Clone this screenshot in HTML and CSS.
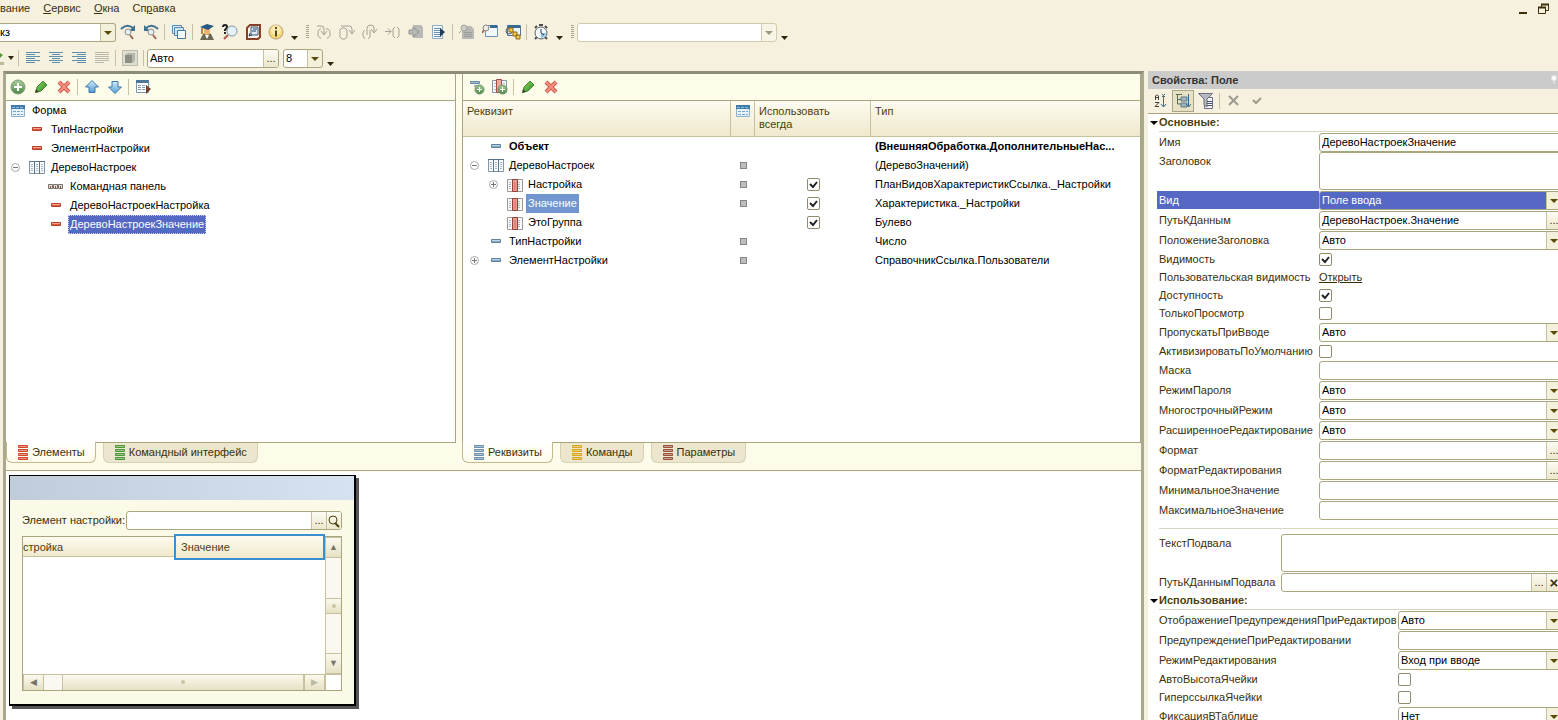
FILE: index.html
```
<!DOCTYPE html>
<html lang="ru">

<head>
    <meta charset="utf-8">
    <title>Конфигуратор</title>
    <link rel="stylesheet" href="styles.css">
</head>

<body>
    <svg class="sprite">
        <defs>
            <linearGradient id="blue" x1="0" y1="0" x2="0" y2="1">
                <stop offset="0" stop-color="#d4ecfb" />
                <stop offset="1" stop-color="#4f9bd6" />
            </linearGradient>
            <linearGradient id="green" x1="0" y1="0" x2="0" y2="1">
                <stop offset="0" stop-color="#a9cf9a" />
                <stop offset="1" stop-color="#4b8746" />
            </linearGradient>
            <linearGradient id="leaf" x1="0" y1="0" x2="1" y2="1">
                <stop offset="0" stop-color="#8fd46c" />
                <stop offset="1" stop-color="#2f8a1d" />
            </linearGradient>
        </defs>
        <symbol id="find-next" viewBox="0 0 16 16">
            <path d="M1 5Q7-1 13 4" fill="none" stroke="#3f7090" stroke-width="2" />
            <path d="M15 1v6H9z" fill="#3f7090" />
            <circle cx="8" cy="8" r="3" fill="#e5eef2" stroke="#8d8d8d" />
            <path d="M10 11l3 4" stroke="#a5675a" stroke-width="2" />
        </symbol>
        <symbol id="find-prev" viewBox="0 0 16 16">
            <path d="M15 5Q9-1 3 4" fill="none" stroke="#3f7090" stroke-width="2" />
            <path d="M1 1v6h6z" fill="#3f7090" />
            <circle cx="8" cy="8" r="3" fill="#e5eef2" stroke="#8d8d8d" />
            <path d="M10 11l3 4" stroke="#a5675a" stroke-width="2" />
        </symbol>
        <symbol id="windows" viewBox="0 0 16 16">
            <path d="M1.500 1.500h9v8h-9z" fill="#e4f1fa" stroke="#5b87a8" />
            <path d="M3.500 3.500h9v8h-9z" fill="#cfe4f3" stroke="#5b87a8" />
            <path d="M6.500 6.500h8v8h-8z" fill="#f3fafe" stroke="#44779c" />
        </symbol>
        <symbol id="student" viewBox="0 0 16 16">
            <path d="M4 10q4-2 8 0l3 6H1z" fill="#6b6753" />
            <ellipse cx="8" cy="7" rx="3" ry="4" fill="#edb36c" />
            <path d="M6 11l2 4 2-4z" fill="#fff" />
            <path d="M1 3l7-3 7 2-6 4z" fill="#285b83" />
            <path d="M3 4v6" stroke="#c08a2c" stroke-width="2" />
        </symbol>
        <symbol id="help-find" viewBox="0 0 16 16">
            <path d="M1 3q0-2 2-2t2 2q0 1-2 3v1M3 8v2" fill="none" stroke="#222" stroke-width="2" />
            <circle cx="10" cy="7" r="5" fill="#e6f2f8" stroke="#8297a2" />
            <path d="M6 11l-4 4" stroke="#ad5949" stroke-width="2" />
        </symbol>
        <symbol id="book" viewBox="0 0 16 16">
            <path d="M2 4l3-3h10v12l-2 2H2z" fill="#fffaf0" stroke="#8a3f28" stroke-width="2" />
            <path d="M6 3h7v8H6z" fill="#dcebf6" stroke="#3a5575" />
            <path d="M8 5h4M7 7h4M5 9l-1 3 3-1" fill="none" stroke="#263f66" />
        </symbol>
        <symbol id="info" viewBox="0 0 16 16">
            <circle cx="8" cy="8" r="7" fill="#f7d878" stroke="#b99a72" />
            <circle cx="8" cy="6" r="5" fill="#fff5cf" opacity=".6" />
            <path d="M8 3v2M8 6.500v6" stroke="#4b4a1e" stroke-width="2" />
        </symbol>
        <symbol id="step-in" viewBox="0 0 16 16">
            <path d="M5 5H4L2 7v5l2 2h1M10 5h2l2 2v5l-2 2h-1M1 2h4q3 0 3 3v5M5 7l3 4 3-4" fill="none" stroke="#a3a195" />
        </symbol>
        <symbol id="step-over" viewBox="0 0 16 16">
            <path d="M1 6l2-2h3l2 2v7l-2 2H3l-2-2zM2 2h8q3 0 3 3v4M10 6l3 4 3-4" fill="none" stroke="#a3a195" />
        </symbol>
        <symbol id="step-out" viewBox="0 0 16 16">
            <path d="M3 15l-2-3V8l2-2M8 6v7l-2 2M5 11V4q0-3 4-3 3 0 3 3v4M9 5l3 4 3-4" fill="none" stroke="#a3a195" />
        </symbol>
        <symbol id="run-to" viewBox="0 0 16 16">
            <path d="M0 7.500h6M3 4.500l3 3-3 3M10 3L8 5v7l2 2M12 3l2 2v7l-2 2" fill="none" stroke="#a3a195" />
        </symbol>
        <symbol id="stop-module" viewBox="0 0 16 16">
            <path d="M5 1h8l2 2v11H5z" fill="#b9bab5" />
            <path d="M1 6h4V3l6 5-6 5v-3H1z" fill="#b9bab5" stroke="#92938e" />
        </symbol>
        <symbol id="module-run" viewBox="0 0 16 16">
            <path d="M1.500 1.500h10v13h-10z" fill="#f8fbfd" stroke="#8facc3" />
            <path d="M3 4.500h7M3 6.500h7M3 8.500h7M3 10.500h7M3 12.500h7" stroke="#6c91b0" />
            <path d="M9 4l5 4-5 5z" fill="#203f59" />
        </symbol>
        <symbol id="module-gray" viewBox="0 0 16 16">
            <path d="M3 2h9l3 3v10H3z" fill="#b8b9b4" />
            <circle cx="5" cy="4" r="3" fill="#cfcfca" stroke="#a0a19c" />
            <path d="M2 7L0 9M5 8.500h8M5 10.500h8M5 12.500h8" stroke="#9a9b96" />
        </symbol>
        <symbol id="window-find" viewBox="0 0 16 16">
            <path d="M3.500 1.500h12v11h-12z" fill="#f2f8fc" stroke="#6c93b0" />
            <path d="M8 1h7v3H8z" fill="#356c96" />
            <circle cx="4" cy="4" r="3" fill="#e9e8e2" stroke="#91897f" />
            <path d="M2 6L0 9" stroke="#9a6d62" stroke-width="2" />
        </symbol>
        <symbol id="links" viewBox="0 0 16 16">
            <path d="M2.500 1.500h13v10h-13z" fill="#edf6fb" stroke="#557995" />
            <path d="M3 1h12v3H3z" fill="#356c96" />
            <circle cx="4" cy="7" r="3" fill="none" stroke="#556" />
            <path d="M4 4h4v4H4zM8 8h4v4H8zM11 11h4v4h-4z" fill="#f7c746" stroke="#8d6a14" />
        </symbol>
        <symbol id="timer" viewBox="0 0 16 16">
            <path d="M2 4l2-2M14 4l-2-2M6 1h4M4 13l-2 2M12 13l2 2" stroke="#4c4c48" stroke-width="2" />
            <circle cx="8" cy="9" r="6" fill="#f3f9fc" stroke="#5c6468" />
            <path d="M8 9h5a5 5 0 0 1-5 5z" fill="#8ec6e6" />
            <path d="M8 5v4l3 2" fill="none" stroke="#335" />
        </symbol>
        <symbol id="align-left" viewBox="0 0 16 16">
            <path d="M1 2.500h14M1 4.500h9M1 6.500h14M1 8.500h9M1 10.500h14M1 12.500h9" stroke="#5e8fae" />
        </symbol>
        <symbol id="align-center" viewBox="0 0 16 16">
            <path d="M1 2.500h14M4 4.500h8M1 6.500h14M4 8.500h8M1 10.500h14M4 12.500h8" stroke="#5e8fae" />
        </symbol>
        <symbol id="align-right" viewBox="0 0 16 16">
            <path d="M1 2.500h14M6 4.500h9M1 6.500h14M6 8.500h9M1 10.500h14M6 12.500h9" stroke="#5e8fae" />
        </symbol>
        <symbol id="align-fill" viewBox="0 0 16 16">
            <path d="M1 2.500h14M1 4.500h14M1 6.500h14M1 8.500h14M1 10.500h14M1 12.500h9" stroke="#b9b8ac" />
        </symbol>
        <symbol id="cube" viewBox="0 0 16 16">
            <path d="M.5.500h15v15H.5z" fill="#dedfcf" stroke="#8e9085" stroke-dasharray="1 1" />
            <path d="M3 5l3-2h7v8l-3 2H3z" fill="#b4b7ad" />
            <path d="M3 5h7v8H3z" fill="#8b8f84" />
        </symbol>
        <symbol id="add" viewBox="0 0 16 16">
            <circle cx="8" cy="8" r="7" fill="url(#green)" stroke="#7f9f7a" />
            <path d="M8 4v8M4 8h8" stroke="#fff" stroke-width="2" />
        </symbol>
        <symbol id="edit" viewBox="0 0 16 16">
            <path d="M3 13l1-5 6-6 4 4-6 6z" fill="url(#leaf)" stroke="#3c8a2a" />
            <path d="M2 14l1-4 3 3z" fill="#35421e" />
        </symbol>
        <symbol id="delete" viewBox="0 0 16 16">
            <path d="M3 3l10 10M13 3L3 13" stroke="#d3584a" stroke-width="4" />
            <path d="M3 3l10 10M13 3L3 13" stroke="#f09182" stroke-width="2" />
        </symbol>
        <symbol id="up" viewBox="0 0 16 16">
            <path d="M8 1.500l6.500 6.500H11v5.500H5V8H1.500z" fill="url(#blue)" stroke="#3b78a8" />
        </symbol>
        <symbol id="down" viewBox="0 0 16 16">
            <path d="M8 14.500L1.500 8H5V2.500h6V8h3.500z" fill="url(#blue)" stroke="#3b78a8" />
        </symbol>
        <symbol id="form-run" viewBox="0 0 16 16">
            <path d="M1.500 2.500h12v11h-12z" fill="#fff" stroke="#7b98ad" />
            <path d="M1 1h13v3H1z" fill="#4e7899" />
            <path d="M3 6.500h9M3 8.500h9M3 10.500h9" stroke="#8199ac" stroke-dasharray="3 1" />
            <path d="M11 6l5 4-5 5z" fill="#73402d" />
        </symbol>
        <symbol id="form" viewBox="0 0 16 16">
            <path d="M1.500 2.500h13v11h-13z" fill="#e7f3fb" stroke="#8fb2ca" />
            <path d="M1 2h14v4H1z" fill="#3f7ba6" />
            <path d="M2 4.500h12" stroke="#8fbcdc" stroke-dasharray="3 1" />
            <path d="M3 8.500h10M3 11.500h10" stroke="#79a6c4" stroke-dasharray="3 1" />
        </symbol>
        <symbol id="dash-red" viewBox="0 0 16 16">
            <path d="M3.500 5.500h9v3h-9z" fill="#e4573c" stroke="#b5412e" />
            <path d="M4 6.500h8" stroke="#f6a18c" />
        </symbol>
        <symbol id="dash-blue" viewBox="0 0 16 16">
            <path d="M3.500 5.500h9v3h-9z" fill="#86abc4" stroke="#5f8199" />
            <path d="M4 6.500h8" stroke="#bdd5e4" />
        </symbol>
        <symbol id="table" viewBox="0 0 16 16">
            <path d="M.5 1.500h15v12H.5z" fill="#f7fafc" stroke="#8296a5" />
            <path d="M0 1.500h16M5.500 2v12M10.500 2v12" stroke="#5a7589" />
            <path d="M2 4.500h12M2 6.500h12M2 8.500h12M2 10.500h12" stroke="#a9b9c4" stroke-dasharray="2 3" />
        </symbol>
        <symbol id="column" viewBox="0 0 16 16">
            <path d="M.5 2.500h15v12H.5z" fill="#f7fafc" stroke="#a3978f" />
            <path d="M2 5.500h12M2 7.500h12M2 9.500h12M2 11.500h12" stroke="#a9b9c4" stroke-dasharray="2 1" />
            <path d="M5.500 2.500h5v12h-5z" fill="#e89a90" stroke="#8f443c" />
            <path d="M8 5v8" stroke="#d3756c" stroke-width="1" />
        </symbol>
        <symbol id="panel" viewBox="0 0 16 16">
            <path d="M.5 5.500h4v4h-4zM5.500 5.500h4v4h-4zM10.500 5.500h4v4h-4z" fill="#e6e1d6" stroke="#77716a" />
            <path d="M2 8h1M7 8h1M12 8h1" stroke="#96504a" stroke-width="2" />
        </symbol>
        <symbol id="minus" viewBox="0 0 11 11">
            <circle cx="5.500" cy="5.500" r="4" fill="#fff" stroke="#a9a9a9" />
            <path d="M3 5.500h5" stroke="#777" />
        </symbol>
        <symbol id="plus" viewBox="0 0 11 11">
            <circle cx="5.500" cy="5.500" r="4" fill="#fff" stroke="#a9a9a9" />
            <path d="M3 5.500h5M5.500 3v5" stroke="#777" />
        </symbol>
        <symbol id="stack" viewBox="0 0 12 15">
            <path d="M1.500.500h9v2h-9zM1.500 4.500h9v2h-9zM1.500 8.500h9v2h-9zM1.500 12.500h9v2h-9z" fill="currentColor" stroke="currentColor" />
            <path d="M2 1.500h8M2 5.500h8M2 9.500h8M2 13.500h8" stroke="#fff" opacity=".45" />
        </symbol>
        <symbol id="add-attr" viewBox="0 0 16 16">
            <path d="M1.500 2.500h9v2h-9z" fill="#a9c3d4" stroke="#668aa3" />
            <path d="M10 6v3M5 7h3" stroke="#4c6f88" />
            <circle cx="10.500" cy="10.500" r="4.500" fill="url(#green)" stroke="#6b9465" />
            <path d="M10.500 8v5M8 10.500h5" stroke="#fff" stroke-width="1" />
        </symbol>
        <symbol id="add-col" viewBox="0 0 16 16">
            <path d="M.5 1.500h14v12H.5z" fill="#f7fafc" stroke="#8296a5" />
            <path d="M2 4.500h11M2 7.500h11M2 10.500h11" stroke="#a9b9c4" stroke-dasharray="2 1" />
            <path d="M4.500.500h5v13h-5z" fill="#e9a9a0" stroke="#a44c47" />
            <circle cx="10.500" cy="10.500" r="4.500" fill="url(#green)" stroke="#6b9465" />
            <path d="M10.500 8v5M8 10.500h5" stroke="#fff" stroke-width="1" />
        </symbol>
        <symbol id="sort" viewBox="0 0 16 16">
            <path d="M2.500 7V3l1-1h1l1 1v4M2.500 4.500h3M2 9.500h4l-4 4h4" fill="none" stroke="#443f38" />
            <path d="M10.500 2v12M8 11l2.500 3 2.500-3M9 1l3 3M12 1L9 4" fill="none" stroke="#3d6f95" />
        </symbol>
        <symbol id="categories" viewBox="0 0 16 16">
            <path d="M1 1.500h6M2.500 2v9h4M2.500 6.500h4" fill="none" stroke="#566a55" />
            <path d="M6 4h6v4H6zM6 10h6v4H6z" fill="#9fb7bf" stroke="#5d7a86" />
            <path d="M13.500 1v12M11 11l2.500 3 2.500-3" fill="none" stroke="#2f648c" />
        </symbol>
        <symbol id="filter" viewBox="0 0 16 16">
            <path d="M6.500 4.500h8v11h-8z" fill="#f5f8fb" stroke="#6c6d88" />
            <path d="M.5.500h14L9 6v8l-3-2V6z" fill="#b5b7c1" stroke="#6e6f78" />
            <path d="M9 8.500h5M9 10.500h5M9 12.500h5" stroke="#4d5273" />
        </symbol>
        <symbol id="cross-gray" viewBox="0 0 16 16">
            <path d="M3 3l9 9M12 3l-9 9" stroke="#9d9a8f" stroke-width="2" />
        </symbol>
        <symbol id="tick-gray" viewBox="0 0 16 16">
            <path d="M4 7l3 3 5-5" fill="none" stroke="#9d9a8f" stroke-width="2" />
        </symbol>
        <symbol id="magnifier" viewBox="0 0 14 14">
            <circle cx="6" cy="6" r="4" fill="none" stroke="#4d3f0c" />
            <path d="M8 9l4 4" stroke="#4d3f0c" stroke-width="2" />
        </symbol>
        <symbol id="pin" viewBox="0 0 8 12">
            <path d="M2 2h4v4H2zM4 6v4" fill="#fff" stroke="#eee" />
        </symbol>
        <symbol id="more" viewBox="0 0 8 4">
            <path d="M0 0h7L3.500 4z" fill="#2f2709" />
        </symbol>
    </svg>

    <header class="menubar">
        <nav class="menu">
            <a href="#">вание</a>
            <a href="#"><u>С</u>ервис</a>
            <a href="#"><u>О</u>кна</a>
            <a href="#">Сп<u>р</u>авка</a>
        </nav>
        <button class="win" aria-label="Свернуть"><svg width="12" height="12"><path d="M1 10h8" stroke="#3b300a" stroke-width="2" /></svg></button>
        <button class="win" aria-label="Восстановить"><svg width="12" height="12"><path d="M.5 4.500h7v6h-7zM3.500 4V1.500h7v6H8" fill="none" stroke="#3b300a" /><path d="M0 4.500h8M3 1.500h8" stroke="#3b300a" stroke-width="2" /></svg></button>
    </header>

    <div class="toolbar">
        <select class="field cut search" aria-label="Поиск"><option>кз</option></select>
        <button class="tool" aria-label="Найти следующий"><svg class="icon"><use href="#find-next" /></svg></button>
        <button class="tool" aria-label="Найти предыдущий"><svg class="icon"><use href="#find-prev" /></svg></button>
        <i class="sep"></i>
        <button class="tool" aria-label="Окна"><svg class="icon"><use href="#windows" /></svg></button>
        <i class="sep"></i>
        <button class="tool" aria-label="Синтакс-помощник"><svg class="icon"><use href="#student" /></svg></button>
        <button class="tool" aria-label="Поиск в справке"><svg class="icon"><use href="#help-find" /></svg></button>
        <button class="tool" aria-label="Содержание справки"><svg class="icon"><use href="#book" /></svg></button>
        <button class="tool" aria-label="О программе"><svg class="icon"><use href="#info" /></svg></button>
        <button class="more" aria-label="Ещё"><svg><use href="#more" /></svg></button>
        <i class="grip"></i>
        <button class="tool" aria-label="Шагнуть в"><svg class="icon"><use href="#step-in" /></svg></button>
        <button class="tool" aria-label="Шагнуть через"><svg class="icon"><use href="#step-over" /></svg></button>
        <button class="tool" aria-label="Шагнуть из"><svg class="icon"><use href="#step-out" /></svg></button>
        <button class="tool" aria-label="Идти до курсора"><svg class="icon"><use href="#run-to" /></svg></button>
        <button class="tool" aria-label="Текущая строка"><svg class="icon"><use href="#stop-module" /></svg></button>
        <button class="tool" aria-label="Модуль"><svg class="icon"><use href="#module-run" /></svg></button>
        <i class="sep"></i>
        <button class="tool" aria-label="Вычислить"><svg class="icon"><use href="#module-gray" /></svg></button>
        <button class="tool" aria-label="Табло"><svg class="icon"><use href="#window-find" /></svg></button>
        <button class="tool" aria-label="Стек вызовов"><svg class="icon"><use href="#links" /></svg></button>
        <i class="sep"></i>
        <button class="tool" aria-label="Замер производительности"><svg class="icon"><use href="#timer" /></svg></button>
        <button class="more" aria-label="Ещё"><svg><use href="#more" /></svg></button>
        <i class="grip"></i>
        <select class="field procedures" aria-label="Процедуры" disabled><option></option></select>
        <button class="more" aria-label="Ещё"><svg><use href="#more" /></svg></button>
    </div>

    <div class="toolbar">
        <button class="color" aria-label="Цвет"><svg width="16" height="16"><path d="M0 3l3 2-3 3z" fill="#5f9440" /><path d="M0 12h4v3H0z" fill="#b9b99b" /><path d="M8 6h6l-3 4z" fill="#2f2709" /></svg></button>
        <i class="sep"></i>
        <button class="tool" aria-label="По левому краю"><svg class="icon"><use href="#align-left" /></svg></button>
        <button class="tool" aria-label="По центру"><svg class="icon"><use href="#align-center" /></svg></button>
        <button class="tool" aria-label="По правому краю"><svg class="icon"><use href="#align-right" /></svg></button>
        <button class="tool" aria-label="По ширине"><svg class="icon"><use href="#align-fill" /></svg></button>
        <i class="sep"></i>
        <button class="tool" aria-label="Рамка"><svg class="icon"><use href="#cube" /></svg></button>
        <i class="sep"></i>
        <span class="field font"><input value="Авто" aria-label="Шрифт"><button aria-label="Выбрать">...</button></span>
        <select class="field size" aria-label="Размер"><option>8</option></select>
        <button class="more" aria-label="Ещё"><svg><use href="#more" /></svg></button>
    </div>

    <div class="workspace">
        <main class="designer">
            <div class="panes">
                <section class="pane elements">
                    <div class="pane-tools">
                        <button class="tool" aria-label="Добавить"><svg class="icon"><use href="#add" /></svg></button>
                        <button class="tool" aria-label="Изменить"><svg class="icon"><use href="#edit" /></svg></button>
                        <button class="tool" aria-label="Удалить"><svg class="icon"><use href="#delete" /></svg></button>
                        <i class="sep"></i>
                        <button class="tool" aria-label="Вверх"><svg class="icon"><use href="#up" /></svg></button>
                        <button class="tool" aria-label="Вниз"><svg class="icon"><use href="#down" /></svg></button>
                        <i class="sep"></i>
                        <button class="tool" aria-label="Проверка"><svg class="icon"><use href="#form-run" /></svg></button>
                    </div>
                    <ul class="tree">
                        <li><svg class="icon"><use href="#form" /></svg><span>Форма</span></li>
                        <li class="level-1"><i class="twist"></i><svg class="icon"><use href="#dash-red" /></svg><span>ТипНастройки</span></li>
                        <li class="level-1"><i class="twist"></i><svg class="icon"><use href="#dash-red" /></svg><span>ЭлементНастройки</span></li>
                        <li class="level-1"><svg class="twist"><use href="#minus" /></svg><svg class="icon"><use href="#table" /></svg><span>ДеревоНастроек</span></li>
                        <li class="level-2"><i class="twist"></i><svg class="icon"><use href="#panel" /></svg><span>Командная панель</span></li>
                        <li class="level-2"><i class="twist"></i><svg class="icon"><use href="#dash-red" /></svg><span>ДеревоНастроекНастройка</span></li>
                        <li class="level-2"><i class="twist"></i><svg class="icon"><use href="#dash-red" /></svg><span class="selected">ДеревоНастроекЗначение</span></li>
                    </ul>
                    <div class="tabs">
                        <button class="tab active"><svg class="red"><use href="#stack" /></svg>Элементы</button>
                        <button class="tab"><svg class="green"><use href="#stack" /></svg>Командный интерфейс</button>
                    </div>
                </section>

                <section class="pane attributes">
                    <div class="pane-tools">
                        <button class="tool" aria-label="Добавить реквизит"><svg class="icon"><use href="#add-attr" /></svg></button>
                        <button class="tool" aria-label="Добавить колонку"><svg class="icon"><use href="#add-col" /></svg></button>
                        <i class="sep"></i>
                        <button class="tool" aria-label="Изменить"><svg class="icon"><use href="#edit" /></svg></button>
                        <button class="tool" aria-label="Удалить"><svg class="icon"><use href="#delete" /></svg></button>
                    </div>
                    <div class="grid-box">
                        <table class="grid">
                            <colgroup>
                                <col class="c-name">
                                <col class="c-flag">
                                <col class="c-use">
                                <col>
                            </colgroup>
                            <thead>
                                <tr>
                                    <th>Реквизит</th>
                                    <th class="mark"><svg class="icon"><use href="#form" /></svg></th>
                                    <th>Использовать всегда</th>
                                    <th>Тип</th>
                                </tr>
                            </thead>
                            <tbody>
                                <tr class="main">
                                    <td><div class="node"><i class="twist"></i><svg class="icon"><use href="#dash-blue" /></svg><span>Объект</span></div></td>
                                    <td></td>
                                    <td></td>
                                    <td>(ВнешняяОбработка.ДополнительныеНас...</td>
                                </tr>
                                <tr>
                                    <td><div class="node"><svg class="twist"><use href="#minus" /></svg><svg class="icon"><use href="#table" /></svg><span>ДеревоНастроек</span></div></td>
                                    <td><i class="dot"></i></td>
                                    <td></td>
                                    <td>(ДеревоЗначений)</td>
                                </tr>
                                <tr>
                                    <td><div class="node level-1"><svg class="twist"><use href="#plus" /></svg><svg class="icon"><use href="#column" /></svg><span>Настройка</span></div></td>
                                    <td><i class="dot"></i></td>
                                    <td class="use"><input type="checkbox" aria-label="Настройка" checked></td>
                                    <td>ПланВидовХарактеристикСсылка._Настройки</td>
                                </tr>
                                <tr>
                                    <td><div class="node level-1"><i class="twist"></i><svg class="icon"><use href="#column" /></svg><span class="current">Значение</span></div></td>
                                    <td><i class="dot"></i></td>
                                    <td class="use"><input type="checkbox" aria-label="Значение" checked></td>
                                    <td>Характеристика._Настройки</td>
                                </tr>
                                <tr>
                                    <td><div class="node level-1"><i class="twist"></i><svg class="icon"><use href="#column" /></svg><span>ЭтоГруппа</span></div></td>
                                    <td></td>
                                    <td class="use"><input type="checkbox" aria-label="ЭтоГруппа" checked></td>
                                    <td>Булево</td>
                                </tr>
                                <tr>
                                    <td><div class="node"><i class="twist"></i><svg class="icon"><use href="#dash-blue" /></svg><span>ТипНастройки</span></div></td>
                                    <td><i class="dot"></i></td>
                                    <td></td>
                                    <td>Число</td>
                                </tr>
                                <tr>
                                    <td><div class="node"><svg class="twist"><use href="#plus" /></svg><svg class="icon"><use href="#dash-blue" /></svg><span>ЭлементНастройки</span></div></td>
                                    <td><i class="dot"></i></td>
                                    <td></td>
                                    <td>СправочникСсылка.Пользователи</td>
                                </tr>
                            </tbody>
                        </table>
                    </div>
                    <div class="tabs">
                        <button class="tab active"><svg class="blue"><use href="#stack" /></svg>Реквизиты</button>
                        <button class="tab"><svg class="yellow"><use href="#stack" /></svg>Команды</button>
                        <button class="tab"><svg class="brown"><use href="#stack" /></svg>Параметры</button>
                    </div>
                </section>
            </div>

            <div class="canvas">
                <div class="preview">
                    <div class="preview-title"></div>
                    <div class="preview-body">
                        <div class="preview-row">
                            <label for="setting">Элемент настройки:</label>
                            <span class="field"><input id="setting"><button aria-label="Выбрать">...</button><button aria-label="Открыть"><svg class="icon"><use href="#magnifier" /></svg></button></span>
                        </div>
                        <div class="preview-table">
                            <div class="heads">
                                <div class="head">стройка</div>
                                <div class="head picked">Значение</div>
                            </div>
                            <div class="vscroll">
                                <button aria-label="Вверх">▲</button>
                                <i class="track"></i>
                                <i class="thumb"></i>
                                <i class="track"></i>
                                <button aria-label="Вниз">▼</button>
                            </div>
                            <div class="hscroll">
                                <button aria-label="Влево">◀</button>
                                <i class="track"></i>
                                <i class="thumb"></i>
                                <button aria-label="Вправо" disabled>▶</button>
                            </div>
                            <div class="corner"></div>
                        </div>
                    </div>
                </div>
            </div>
        </main>

        <aside class="props">
            <h2 class="props-title">Свойства: Поле<svg width="8" height="12"><use href="#pin" /></svg></h2>
            <div class="props-tools">
                <button class="tool" aria-label="По алфавиту"><svg class="icon"><use href="#sort" /></svg></button>
                <button class="tool pressed" aria-label="По категориям"><svg class="icon"><use href="#categories" /></svg></button>
                <button class="tool" aria-label="Только важные"><svg class="icon"><use href="#filter" /></svg></button>
                <i class="sep"></i>
                <button class="tool" aria-label="Отменить"><svg class="icon"><use href="#cross-gray" /></svg></button>
                <button class="tool" aria-label="Принять"><svg class="icon"><use href="#tick-gray" /></svg></button>
            </div>
            <div class="props-list">
                <h3>Основные:</h3>
                <div class="group">
                    <div class="row"><label for="p1">Имя</label><input class="field" id="p1" value="ДеревоНастроекЗначение"></div>
                    <div class="row tall"><label for="p2">Заголовок</label><textarea class="field" id="p2"></textarea></div>
                    <div class="row chosen"><label for="p3">Вид</label><select class="field" id="p3"><option>Поле ввода</option></select></div>
                    <div class="row"><label for="p4">ПутьКДанным</label><span class="field"><input id="p4" value="ДеревоНастроек.Значение"><button aria-label="Выбрать">...</button></span></div>
                    <div class="row"><label for="p5">ПоложениеЗаголовка</label><select class="field" id="p5"><option>Авто</option></select></div>
                    <div class="row short"><label for="p6">Видимость</label><input type="checkbox" id="p6" checked></div>
                    <div class="row short"><span class="label">Пользовательская видимость</span><a href="#">Открыть</a></div>
                    <div class="row short"><label for="p8">Доступность</label><input type="checkbox" id="p8" checked></div>
                    <div class="row short"><label for="p9">ТолькоПросмотр</label><input type="checkbox" id="p9"></div>
                    <div class="row"><label for="p10">ПропускатьПриВводе</label><select class="field" id="p10"><option>Авто</option></select></div>
                    <div class="row short"><label for="p11">АктивизироватьПоУмолчанию</label><input type="checkbox" id="p11"></div>
                    <div class="row"><label for="p12">Маска</label><input class="field" id="p12"></div>
                    <div class="row"><label for="p13">РежимПароля</label><select class="field" id="p13"><option>Авто</option></select></div>
                    <div class="row"><label for="p14">МногострочныйРежим</label><select class="field" id="p14"><option>Авто</option></select></div>
                    <div class="row"><label for="p15">РасширенноеРедактирование</label><select class="field" id="p15"><option>Авто</option></select></div>
                    <div class="row"><label for="p16">Формат</label><span class="field"><input id="p16"><button aria-label="Выбрать">...</button></span></div>
                    <div class="row"><label for="p17">ФорматРедактирования</label><span class="field"><input id="p17"><button aria-label="Выбрать">...</button></span></div>
                    <div class="row"><label for="p18">МинимальноеЗначение</label><input class="field" id="p18"></div>
                    <div class="row"><label for="p19">МаксимальноеЗначение</label><input class="field" id="p19"></div>
                </div>
                <hr>
                <div class="group footer">
                    <div class="row tall"><label for="p20">ТекстПодвала</label><textarea class="field" id="p20"></textarea></div>
                    <div class="row"><label for="p21">ПутьКДаннымПодвала</label><span class="field"><input id="p21"><button aria-label="Выбрать">...</button><button class="clear" aria-label="Очистить">×</button></span></div>
                </div>
                <h3>Использование:</h3>
                <div class="group usage">
                    <div class="row"><label for="p22">ОтображениеПредупрежденияПриРедактиров</label><select class="field" id="p22"><option>Авто</option></select></div>
                    <div class="row"><label for="p23">ПредупреждениеПриРедактировании</label><input class="field" id="p23"></div>
                    <div class="row"><label for="p24">РежимРедактирования</label><select class="field" id="p24"><option>Вход при вводе</option></select></div>
                    <div class="row short"><label for="p25">АвтоВысотаЯчейки</label><input type="checkbox" id="p25"></div>
                    <div class="row short"><label for="p26">ГиперссылкаЯчейки</label><input type="checkbox" id="p26"></div>
                    <div class="row"><label for="p27">ФиксацияВТаблице</label><select class="field" id="p27"><option>Нет</option></select></div>
                </div>
            </div>
        </aside>
    </div>
</body>

</html>
```

FILE: styles.css
```
* {
    box-sizing: border-box;
}

body {
    margin: 0;
    height: 100vh;
    display: flex;
    flex-direction: column;
    overflow: hidden;
    background: #f6f0df;
    color: #3b300a;
    font: 11px/13px "Liberation Sans", Arial, sans-serif;
}

button,
input,
select,
textarea {
    font: inherit;
    color: #000;
    margin: 0;
    padding: 0;
    border: 0;
    border-radius: 0;
    background: none;
    outline: none;
}

a {
    color: inherit;
}

/* display: none would switch off the gradients */
.sprite {
    position: absolute;
    width: 0;
    height: 0;
}

.icon {
    width: 16px;
    height: 16px;
    flex: none;
    display: block;
}

/* menu */

.menubar {
    display: flex;
    height: 19px;
    padding-right: 4px;
}

.menu {
    flex: 1;
    display: flex;
    gap: 13px;
    padding-top: 2px;
}

.menu a {
    text-decoration: none;
}

.win {
    width: 20px;
    height: 15px;
}

.win svg {
    display: block;
    margin: 2px auto 0;
}

/* toolbars */

.toolbar {
    display: flex;
    align-items: center;
    height: 26px;
}

.tool {
    width: 23px;
    height: 22px;
    flex: none;
    display: flex;
    align-items: center;
    padding-left: 4px;
}

.tool.pressed {
    width: 22px;
    padding-left: 2px;
    border: 1px solid #a9a688;
    background: #e7e2c6;
}

.sep {
    flex: none;
    width: 1px;
    height: 16px;
    margin: 0 2px;
    background: #c5c1a4;
}

.more {
    flex: none;
    width: 16px;
    height: 18px;
}

.more svg {
    display: block;
    width: 8px;
    height: 4px;
    margin: 12px auto 0;
}

.grip {
    flex: none;
    width: 3px;
    height: 14px;
    margin: 0 3px;
    background: repeating-linear-gradient(#aaa78f 0 1px, transparent 1px 2px);
}

.color {
    width: 16px;
    height: 16px;
}

.field {
    display: flex;
    min-width: 0;
    width: 100%;
    height: 19px;
    padding: 0 2px;
    border: 1px solid #a9a67f;
    border-radius: 3px;
    background: #fff;
    overflow: hidden;
}

.field input {
    flex: 1;
    min-width: 0;
}

.field button {
    flex: none;
    width: 15px;
    border-left: 1px solid #c6c2a0;
    background: linear-gradient(#fcfbf3, #ece8cd);
    color: #3b300a;
    line-height: 17px;
    overflow: hidden;
}

.field .clear {
    font-size: 15px;
    font-weight: bold;
}

span.field {
    padding-right: 0;
}

select.field {
    appearance: none;
    padding-right: 18px;
    background: #fff url("data:image/svg+xml,%3Csvg xmlns='http://www.w3.org/2000/svg' width='15' height='17'%3E%3Crect width='15' height='17' fill='%23f3f0dc'/%3E%3Cpath d='M.5 0v17' stroke='%23c6c2a0'/%3E%3Cpath d='M4 7h8l-4 4z' fill='%235c4a08'/%3E%3C/svg%3E") right center no-repeat;
}

select.field:disabled {
    opacity: 1;
    border-color: #d0ccb0;
    background-image: url("data:image/svg+xml,%3Csvg xmlns='http://www.w3.org/2000/svg' width='15' height='17'%3E%3Crect width='15' height='17' fill='%23f8f4e6'/%3E%3Cpath d='M.5 0v17' stroke='%23d0ccb0'/%3E%3Cpath d='M4 7h8l-4 4z' fill='%23a09a7c'/%3E%3C/svg%3E");
}

.toolbar .search {
    width: 116px;
    padding-left: 0;
    border-left: 0;
    border-radius: 0 3px 3px 0;
}

.toolbar .procedures {
    width: 200px;
}

.toolbar .font {
    width: 132px;
    margin: 0 4px 0 1px;
}

.toolbar .size {
    width: 40px;
}

input[type="checkbox"] {
    appearance: none;
    width: 13px;
    height: 13px;
    border: 1px solid #8f8b6c;
    border-radius: 2px;
    background: #fff;
}

input[type="checkbox"]:checked {
    background: #fff url("data:image/svg+xml,%3Csvg xmlns='http://www.w3.org/2000/svg' width='11' height='11'%3E%3Cpath d='M2 5l3 3 4-5' fill='none' stroke='%23222' stroke-width='2'/%3E%3C/svg%3E") center no-repeat;
}

/* form designer */

.workspace {
    flex: 1;
    min-height: 0;
    display: flex;
}

.designer {
    flex: 1;
    min-width: 0;
    display: flex;
    flex-direction: column;
    margin: 0 4px 0 3px;
    border: solid #a9a98f;
    border-width: 3px 3px 0;
    border-top-color: #8b8b78;
    background: #fdfbea;
}

.panes {
    display: flex;
    gap: 6px;
    height: 397px;
    border-bottom: 1px solid #a9a67f;
}

.pane {
    display: flex;
    flex-direction: column;
    min-width: 0;
}

.elements {
    flex: 450;
}

.attributes {
    flex: 679;
}

.pane-tools {
    display: flex;
    align-items: center;
    height: 26px;
    border: 1px solid #a9a67f;
    border-width: 0 1px;
}

.attributes .pane-tools {
    padding-left: 2px;
}

.elements .pane-tools {
    border-left: 0;
}

.tree,
.grid-box {
    flex: 1;
    margin: 0;
    border: 1px solid #a9a67f;
    background: #fff;
    color: #000;
    overflow: hidden;
}

.tree {
    padding: 0 0 0 4px;
    border-left: 0;
    list-style: none;
}

.tree li,
.node {
    display: flex;
    align-items: center;
    height: 19px;
}

.tree span,
.node span {
    margin-left: 3px;
    padding: 0 2px;
    line-height: 19px;
}

.tree span {
    margin-left: 4px;
}

.twist {
    flex: none;
    width: 11px;
    height: 11px;
    margin-right: 8px;
}

.level-2,
.node.level-1 {
    padding-left: 19px;
}

.tree .selected {
    background: #5468c4;
    color: #fff;
    outline: 1px dotted #c9cff0;
    outline-offset: -1px;
}

.node .current {
    background: #7196cf;
    color: #fff;
}

.grid {
    width: 100%;
    table-layout: fixed;
    border-collapse: separate;
    border-spacing: 0;
}

.c-name {
    width: 268px;
}

.c-flag {
    width: 24px;
}

.c-use {
    width: 116px;
}

.grid th {
    height: 36px;
    padding: 4px;
    border: solid #c6c2a0;
    border-width: 0 1px 1px 0;
    background: linear-gradient(#fdfbf0, #efe9cd);
    color: #4d3f0c;
    font-weight: normal;
    text-align: left;
    vertical-align: top;
}

.grid th:last-child {
    border-right: 0;
}

.grid .mark {
    padding: 2px 4px;
}

.grid td {
    height: 19px;
    padding: 0 4px;
    overflow: hidden;
    white-space: nowrap;
    text-overflow: ellipsis;
}

.grid td:first-child {
    padding-left: 6px;
}

.grid .main {
    font-weight: bold;
}

.grid .use {
    text-align: center;
}

.grid .use input {
    display: block;
    margin: 0 auto;
}

.dot {
    display: block;
    width: 7px;
    height: 7px;
    margin: 0 auto;
    border: 1px solid #858585;
    background: #bdbdbd;
}

.tabs {
    display: flex;
    gap: 7px;
    height: 27px;
}

.tab {
    display: flex;
    align-items: center;
    gap: 3px;
    height: 20px;
    padding: 0 10px;
    border: 1px solid #d6d1b0;
    border-top: 0;
    border-radius: 0 0 6px 6px;
    background: #ebe6cd;
    color: #3b300a;
}

.tab.active {
    height: 21px;
    margin-top: -1px;
    border-color: #c6b98a;
    background: linear-gradient(#fff, #fdfbea);
}

.tab svg {
    width: 12px;
    height: 15px;
}

.red { color: #d9432a; }
.green { color: #4c9637; }
.blue { color: #6a90ad; }
.yellow { color: #d9a520; }
.brown { color: #9a5039; }

.canvas {
    flex: 1;
    padding: 4px 3px;
    background: #fff;
}

.preview {
    width: 347px;
    border: solid #000;
    border-width: 1px 2px 2px 1px;
    background: #fbf9e8;
    box-shadow: 3px 3px #555;
}

.preview-title {
    height: 24px;
    background: linear-gradient(90deg, #c0ccda, #d6e2f0);
}

.preview-body {
    padding: 11px 12px 13px;
}

.preview-row {
    display: flex;
    align-items: center;
    margin-bottom: 6px;
}

.preview-row label {
    flex: none;
    width: 104px;
    white-space: nowrap;
}

.preview-row .icon {
    width: 14px;
    height: 14px;
}

.preview-table {
    display: grid;
    grid-template-columns: 1fr 16px;
    grid-template-rows: 1fr 16px;
    height: 155px;
    border: 1px solid #a9a67f;
    background: #fff;
}

.heads {
    display: flex;
    height: 20px;
}

.head {
    flex: none;
    width: 50%;
    border-bottom: 1px solid #c6c2a0;
    background: linear-gradient(#fdfbf0, #efe9cd);
    color: #4d3f0c;
    line-height: 20px;
}

.head.picked {
    height: 26px;
    margin-top: -3px;
    padding-left: 5px;
    border: 2px solid #3a8fd0;
    line-height: 22px;
}

.vscroll,
.hscroll {
    display: flex;
    background: #faf8f0;
}

.vscroll {
    flex-direction: column;
    border-left: 1px solid #c6c2a0;
}

.hscroll {
    border-top: 1px solid #c6c2a0;
}

.corner {
    border: solid #c6c2a0;
    border-width: 1px 0 0 1px;
}

.preview-table button,
.thumb {
    flex: none;
    background: linear-gradient(#fbf9ee, #e6e1c4);
    color: #777468;
    font-size: 9px;
    line-height: 13px;
}

.preview-table button:disabled {
    color: #bdb99f;
}

.vscroll button,
.vscroll .thumb {
    border: solid #c6c2a0;
    border-width: 1px 0;
}

.vscroll button {
    height: 21px;
}

.vscroll .thumb {
    height: 16px;
}

.hscroll button,
.hscroll .thumb {
    border: solid #c6c2a0;
    border-width: 0 1px;
}

.hscroll button {
    width: 21px;
}

.hscroll .track {
    width: 18px;
}

.hscroll .thumb {
    flex: 1;
}

.vscroll .track {
    flex: 1;
}

.thumb::after {
    content: "";
    display: block;
    width: 4px;
    height: 4px;
    margin: 5px auto;
    border-radius: 2px;
    background: #c9c5a5;
}

/* property palette */

.props {
    flex: none;
    width: 410px;
    display: flex;
    flex-direction: column;
    overflow: hidden;
}

.props-title {
    display: flex;
    justify-content: space-between;
    align-items: center;
    height: 18px;
    margin: 0;
    padding-left: 4px;
    background: #cbcbcb;
    color: #333;
    font-size: 11px;
}

.props-tools {
    display: flex;
    align-items: center;
    height: 25px;
    padding-left: 1px;
    border-bottom: 1px solid #a9a67f;
}

/* fields run past the right edge of the palette */
.props-list {
    flex: 1;
    min-height: 0;
    margin-right: -4px;
    padding-left: 9px;
    background: #fff;
}

.props h3 {
    display: flex;
    align-items: center;
    height: 18px;
    margin: 0 0 0 2px;
    border-bottom: 1px solid #d8d5c4;
    color: #4d3f0c;
    font-size: 11px;
}

.props h3::before {
    content: "";
    margin: 0 1px 0 -9px;
    border: 4px solid transparent;
    border-top-color: #000;
    border-bottom: 0;
}

.group {
    --label: 162px;
}

.footer {
    --label: 124px;
}

.usage {
    --label: 241px;
}

.row {
    display: grid;
    grid-template-columns: var(--label) 1fr;
    align-items: center;
    height: 20px;
}

.row.short {
    height: 18px;
}

.row.tall {
    height: 38px;
    align-items: start;
}

.row label,
.row .label {
    padding-left: 2px;
    line-height: 18px;
    white-space: nowrap;
}

.row textarea {
    height: 38px;
    resize: none;
}

.chosen label {
    background: #5468c4;
    color: #fff;
}

.chosen select.field {
    background-color: #5468c4;
    color: #fff;
}

.props hr {
    margin: 8px 0 5px 2px;
    border: 0;
    border-top: 1px solid #d8d5c4;
}
```
